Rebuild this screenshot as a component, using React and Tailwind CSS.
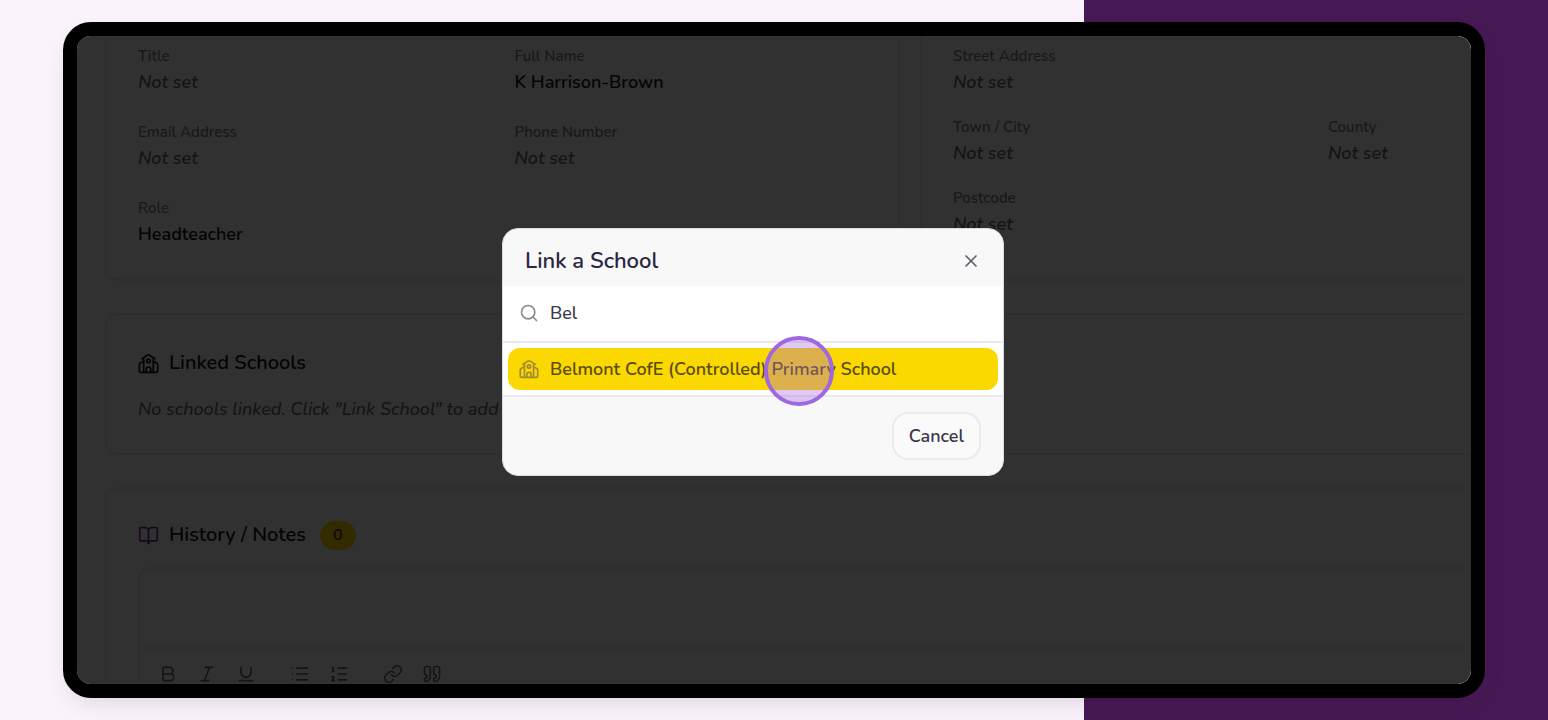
import { useState } from "react";
import {
	Bold,
	BookOpen,
	Italic,
	Link,
	List,
	ListOrdered,
	Quote,
	Search,
	Underline,
	X,
} from "lucide-react";

const schools = ["Belmont CofE (Controlled) Primary School"];

const toolbar = [
	[
		{ label: "Bold", Icon: Bold },
		{ label: "Italic", Icon: Italic },
		{ label: "Underline", Icon: Underline },
	],
	[
		{ label: "Bullet list", Icon: List },
		{ label: "Numbered list", Icon: ListOrdered },
	],
	[
		{ label: "Insert link", Icon: Link },
		{ label: "Quote", Icon: Quote },
	],
];

const SchoolIcon = ({ size, className }) => (
	<svg
		width={size}
		height={size}
		viewBox="0 0 24 24"
		fill="none"
		stroke="currentColor"
		strokeWidth="2"
		strokeLinecap="round"
		strokeLinejoin="round"
		className={className}
		aria-hidden="true"
	>
		<path d="M4.5 6.5 10.6 2.6a2.6 2.6 0 0 1 2.8 0l6.1 3.9" />
		<path d="M6.5 6v16M17.5 6v16" />
		<path d="M6.5 9.5 3 11.2a2 2 0 0 0-1.5 1.9V20a2 2 0 0 0 2 2h17a2 2 0 0 0 2-2v-6.9a2 2 0 0 0-1.5-1.9l-3.5-1.7" />
		<path d="M14.5 22v-4a2 2 0 0 0-2-2h-1a2 2 0 0 0-2 2v4" />
		<circle cx="12" cy="9" r="2" />
	</svg>
);

const Field = ({ label, value }) => (
	<div>
		<dt className="text-[15px] leading-5 font-semibold text-[#7d7b88]">
			{label}
		</dt>
		<dd
			className={`mt-0.5 text-lg leading-7 font-semibold ${
				value ? "text-[#17131f]" : "italic text-[#66646f]"
			}`}
		>
			{value || "Not set"}
		</dd>
	</div>
);

const Card = ({ className = "", children }) => (
	<section
		className={`rounded-xl border-2 border-[#e4e4e8] bg-[#f6f6f6] px-[31px] ${className}`}
	>
		{children}
	</section>
);

const ContactPage = () => (
	<div className="w-[1600px] pl-7 text-[#17131f]">
		<div className="flex gap-5">
			<Card className="w-[795px] rounded-t-none border-t-0 pt-[10px] pb-[31px]">
				<dl className="grid grid-cols-2 gap-x-6 gap-y-[26px]">
					<Field label="Title" />
					<Field label="Full Name" value="K Harrison-Brown" />
					<Field label="Email Address" />
					<Field label="Phone Number" />
					<Field label="Role" value="Headteacher" />
				</dl>
			</Card>
			<Card className="flex-1 rounded-t-none border-t-0 pt-[10px]">
				<dl className="grid grid-cols-[375px_1fr] gap-y-[21px]">
					<div className="col-span-2">
						<Field label="Street Address" />
					</div>
					<Field label="Town / City" />
					<Field label="County" />
					<Field label="Postcode" />
				</dl>
			</Card>
		</div>

		<Card className="mt-8 pt-[34px] pb-[30px]">
			<h2 className="flex items-center gap-2.5 text-xl leading-7 font-semibold">
				<SchoolIcon size={21} /> Linked Schools
			</h2>
			<p className="mt-[18px] text-lg leading-7 font-medium text-[#66646f] italic">
				No schools linked. Click "Link School" to add one.
			</p>
		</Card>

		<Card className="mt-8 pt-[30px] pb-8">
			<h2 className="flex items-center gap-2.5 text-xl leading-8 font-semibold">
				<BookOpen size={21} className="text-[#7b2a92]" /> History / Notes
				<span className="ml-1 flex h-[29px] w-[36px] items-center justify-center rounded-full bg-[#fbd800] text-base font-semibold text-[#4a1a56]">
					0
				</span>
			</h2>
			<div className="mt-4 rounded-xl border-2 border-[#e4e4e8]">
				<textarea
					aria-label="Note"
					className="block h-[78px] w-full resize-none outline-none"
				/>
				<div className="flex items-center gap-[34px] border-t-2 border-[#e4e4e8] px-[18px] py-[15px] text-[#64626d]">
					{toolbar.map((group, i) => (
						<div key={i} className="flex gap-[19px]">
							{group.map(({ label, Icon }) => (
								<button key={label} type="button" aria-label={label}>
									<Icon size={20} />
								</button>
							))}
						</div>
					))}
				</div>
			</div>
		</Card>
	</div>
);

const LinkSchoolDialog = () => {
	const [query, setQuery] = useState("Bel");
	const results = schools.filter((name) =>
		name.toLowerCase().includes(query.toLowerCase())
	);

	return (
		<div
			role="dialog"
			aria-labelledby="link-school-title"
			className="w-[502px] overflow-hidden rounded-2xl border border-[#dcdce0] bg-[#f8f8f9] text-[#3b3748]"
		>
			<div className="flex items-center justify-between px-[22px] pt-4 pb-[9px]">
				<h1
					id="link-school-title"
					className="text-[22px] leading-8 font-semibold text-[#2b2740]"
				>
					Link a School
				</h1>
				<button type="button" aria-label="Close" className="text-[#5f5e66]">
					<X size={20} />
				</button>
			</div>
			<label className="flex h-[57px] items-center gap-[11px] border-b-2 border-[#ebe9ef] bg-white px-4">
				<Search size={20} className="text-[#8d8c93]" />
				<input
					aria-label="Search schools"
					value={query}
					onChange={(e) => setQuery(e.target.value)}
					className="flex-1 text-lg font-medium outline-none"
				/>
			</label>
			<ul className="border-b-2 border-[#ebe9ef] bg-white p-[5px]">
				{results.map((name) => (
					<li key={name} className="relative">
						<button
							type="button"
							className="flex h-[42px] w-full items-center gap-[11px] rounded-xl bg-[#fbd800] px-[11px] text-lg font-semibold text-[#5a4c16]"
						>
							<SchoolIcon size={20} className="text-[#a08a35]" />
							{name}
						</button>
						{/* click marker */}
						<span className="absolute top-[-12px] left-[256px] size-[70px] rounded-full border-4 border-[#9f67e0] bg-[#a566e0]/35" />
					</li>
				))}
			</ul>
			<div className="flex justify-end px-[22px] py-[15px]">
				<button
					type="button"
					className="h-12 rounded-2xl border-2 border-[#ebebee] bg-[#fafafb] px-[15px] text-lg font-semibold"
				>
					Cancel
				</button>
			</div>
		</div>
	);
};

export default function App() {
	return (
		<main className="min-h-screen bg-[linear-gradient(to_right,#faf3fb_70%,#471954_70%)] px-[63px] py-[22px] font-['Nunito','Open_Sans',sans-serif]">
			<div className="relative aspect-[1422/676] overflow-hidden rounded-[28px] border-[14px] border-black bg-[#f2f2f2] shadow-[0_10px_24px_-6px_rgba(0,0,0,0.12)]">
				<ContactPage />
				<div className="absolute inset-0 flex items-center justify-center bg-black/80 pr-[42px] pb-[17px]">
					<LinkSchoolDialog />
				</div>
			</div>
		</main>
	);
}
